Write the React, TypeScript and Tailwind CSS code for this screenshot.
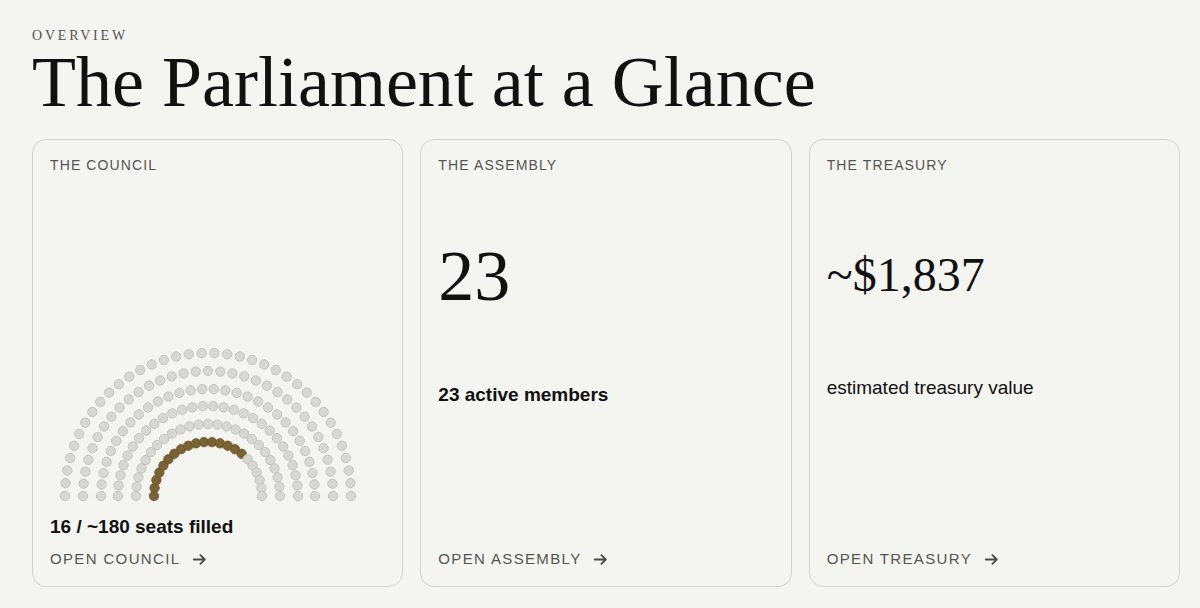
import React from "react";

const serif = "font-['Liberation_Serif','Times_New_Roman',serif]";
const sans = "font-['Liberation_Sans',Arial,sans-serif]";

// rows of the hemicycle, inner to outer
const ROWS = [
  { r: 54, n: 22 },
  { r: 72, n: 25 },
  { r: 90, n: 28 },
  { r: 107, n: 30 },
  { r: 125, n: 33 },
  { r: 143, n: 36 },
];
const FILLED = 16;

function Hemicycle() {
  const cx = 158;
  const cy = 151;
  const seats: { x: number; y: number; filled: boolean; key: string }[] = [];
  ROWS.forEach((row, ri) => {
    for (let i = 0; i < row.n; i++) {
      const a = Math.PI - (i * Math.PI) / (row.n - 1);
      seats.push({
        x: cx + row.r * Math.cos(a),
        y: cy - row.r * Math.sin(a),
        filled: ri === 0 && i < FILLED,
        key: `${ri}-${i}`,
      });
    }
  });

  return (
    <svg width="316" height="158" viewBox="0 0 316 158" className="block">
      {seats.map((s) => (
        <circle
          key={s.key}
          cx={s.x}
          cy={s.y}
          r={4.7}
          fill={s.filled ? "#7a6232" : "#d7d7d3"}
          stroke={s.filled ? "#6a5428" : "#bcbcb7"}
          strokeWidth={0.8}
        />
      ))}
    </svg>
  );
}

function Arrow() {
  return (
    <svg width="13" height="11" viewBox="0 0 13 11" fill="none" className="ml-[13px]">
      <path
        d="M0.5 5.5H11.8M7.4 1.2L11.8 5.5L7.4 9.8"
        stroke="#4a4a47"
        strokeWidth="1.8"
        strokeLinecap="round"
        strokeLinejoin="round"
      />
    </svg>
  );
}

function CardLink({ label }: { label: string }) {
  return (
    <div className="flex items-center">
      <span className={`${sans} text-[15px] leading-[20px] tracking-[0.09em] text-[#555552]`}>{label}</span>
      <Arrow />
    </div>
  );
}

function CardLabel({ children }: { children: React.ReactNode }) {
  return (
    <div className={`${sans} text-[14px] leading-[16px] tracking-[0.08em] text-[#555552]`}>{children}</div>
  );
}

function Card({ children }: { children: React.ReactNode }) {
  return (
    <div className="flex flex-col rounded-[14px] border border-[#d2d2cd] bg-[#f4f4f0] p-[17px]">{children}</div>
  );
}

export default function App() {
  return (
    <div className="min-h-[608px] bg-[#f4f4f0] pl-[32px] pr-[20px] pt-[28px] text-[#111]">
      <div className={`${serif} text-[14px] leading-[16px] tracking-[0.2em] text-[#555552]`}>OVERVIEW</div>
      <h1 className={`${serif} mt-[2px] text-[72px] leading-[72px] font-normal text-[#111]`}>
        The Parliament at a Glance
      </h1>

      <div className="mt-[21px] grid h-[448px] grid-cols-3 gap-[17px]">
        {/* Council */}
        <Card>
          <CardLabel>THE COUNCIL</CardLabel>
          <div className="flex flex-1 items-end">
            <Hemicycle />
          </div>
          <div className={`${sans} mt-[12px] text-[19px] leading-[24px] font-bold text-[#111]`}>
            16 / ~180 seats filled
          </div>
          <div className="mt-[10px]">
            <CardLink label="OPEN COUNCIL" />
          </div>
        </Card>

        {/* Assembly */}
        <Card>
          <CardLabel>THE ASSEMBLY</CardLabel>
          <div className={`${serif} mt-[67px] text-[72px] leading-[72px] text-[#111]`}>23</div>
          <div className={`${sans} mt-[71px] text-[19px] leading-[24px] font-bold text-[#111]`}>
            23 active members
          </div>
          <div className="flex-1" />
          <CardLink label="OPEN ASSEMBLY" />
        </Card>

        {/* Treasury */}
        <Card>
          <CardLabel>THE TREASURY</CardLabel>
          <div className={`${serif} mt-[78px] text-[48px] leading-[48px] text-[#111]`}>~$1,837</div>
          <div className={`${sans} mt-[77px] text-[19px] leading-[24px] text-[#111]`}>
            estimated treasury value
          </div>
          <div className="flex-1" />
          <CardLink label="OPEN TREASURY" />
        </Card>
      </div>
    </div>
  );
}
